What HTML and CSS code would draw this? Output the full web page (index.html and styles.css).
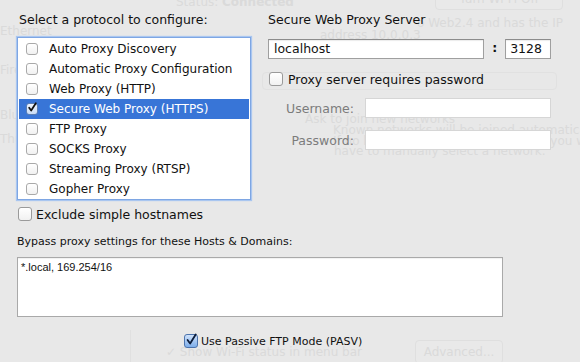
FILE: index.html
```html
<!DOCTYPE html>
<html>
<head>
<meta charset="utf-8">
<link rel="stylesheet" href="styles.css">
</head>
<body>
<div class="ghost" aria-hidden="true">
  <span class="g g-status">Status:</span>
  <span class="g g-conn">Connected</span>
  <span class="g-btn g-turn">Turn Wi-Fi Off</span>
  <span class="g g-ip">o Web2.4 and has the IP</span>
  <span class="g g-addr">address 10.0.0.3</span>
  <span class="g-pop"></span>
  <span class="g g-eth">Ethernet</span>
  <span class="g g-fw">FireWire</span>
  <span class="g g-bt">Bluetooth</span>
  <span class="g g-tb">Thunderbolt</span>
  <span class="g g-ask">Ask to join new networks</span>
  <span class="g g-known">Known networks will be joined automatically.</span>
  <span class="g g-ifno">If no known networks are available, you will</span>
  <span class="g g-have">have to manually select a network.</span>
  <span class="g g-show">✓ Show Wi-Fi status in menu bar</span>
  <span class="g-btn g-adv">Advanced...</span>
  <span class="g-line g-line1"></span>
</div>

<main class="sheet">
  <div class="top">
    <section class="left">
      <div class="title">Select a protocol to configure:</div>
      <div class="list">
        <div class="row"><span class="cb"></span><span>Auto Proxy Discovery</span></div>
        <div class="row"><span class="cb"></span><span>Automatic Proxy Configuration</span></div>
        <div class="row"><span class="cb"></span><span>Web Proxy (HTTP)</span></div>
        <div class="row sel"><span class="cb on"><svg viewBox="0 0 12 12" class="chk"><path d="M2.6 5.6 L5 9 L10.6 0.2"/></svg></span><span>Secure Web Proxy (HTTPS)</span></div>
        <div class="row"><span class="cb"></span><span>FTP Proxy</span></div>
        <div class="row"><span class="cb"></span><span>SOCKS Proxy</span></div>
        <div class="row"><span class="cb"></span><span>Streaming Proxy (RTSP)</span></div>
        <div class="row"><span class="cb"></span><span>Gopher Proxy</span></div>
      </div>
      <label class="opt exclude"><span class="cb big"></span><span>Exclude simple hostnames</span></label>
    </section>

    <section class="right">
      <div class="title">Secure Web Proxy Server</div>
      <div class="hostrow">
        <div class="field host">localhost</div>
        <div class="colon">:</div>
        <div class="field port">3128</div>
      </div>
      <label class="opt pw"><span class="cb big"></span><span>Proxy server requires password</span></label>
      <div class="cred">
        <div class="lab">Username:</div>
        <div class="field dis"></div>
      </div>
      <div class="cred">
        <div class="lab">Password:</div>
        <div class="field dis"></div>
      </div>
    </section>
  </div>

  <div class="bypass-label">Bypass proxy settings for these Hosts &amp; Domains:</div>
  <div class="bypass">*.local, 169.254/16</div>

  <label class="opt pasv"><span class="cb big blue"><svg viewBox="0 0 14 14" class="chk"><path d="M3 7 L6 11 L12.5 0.5"/></svg></span><span>Use Passive FTP Mode (PASV)</span></label>
</main>
</body>
</html>
```

FILE: styles.css
```css
* { box-sizing: border-box; }
html, body {
  margin: 0;
  padding: 0;
}
body {
  width: 580px;
  height: 362px;
  overflow: hidden;
  background: #e8e8e8;
  font-family: "DejaVu Sans", "Noto Sans", sans-serif;
  font-size: 12px;
  color: #111;
  position: relative;
}

/* background window seen through the sheet */
.ghost { position: absolute; inset: 0; z-index: 0; }
.g { position: absolute; color: #dadada; font-size: 12px; white-space: nowrap; }
.g-status { left: 176px; top: -5px; }
.g-conn { left: 222px; top: -5px; font-weight: bold; }
.g-ip { left: 417px; top: 16px; }
.g-addr { left: 320px; top: 28px; }
.g-eth { left: 0; top: 24px; }
.g-fw { left: 0; top: 63px; }
.g-bt { left: 0; top: 108px; }
.g-tb { left: 0; top: 132px; }
.g-ask { left: 305px; top: 112px; }
.g-known { left: 333px; top: 123px; }
.g-ifno { left: 333px; top: 134px; }
.g-have { left: 334px; top: 144px; }
.g-show { left: 166px; top: 345px; }
.g-btn { position: absolute; border: 1px solid #dfdfdf; border-radius: 4px; color: #dadada; font-size: 12px; text-align: center; background: #e9e9e9; }
.g-turn { left: 435px; top: -12px; width: 128px; height: 22px; line-height: 20px; }
.g-adv { left: 415px; top: 340px; width: 88px; height: 24px; line-height: 22px; }
.g-pop { position: absolute; left: 262px; top: 72px; width: 295px; height: 18px; border: 1px solid #e1e1e1; border-radius: 4px; }
.g-line { position: absolute; background: #e0e0e0; }
.g-line1 { left: 130px; top: 330px; width: 1px; height: 32px; }

.sheet {
  position: relative;
  z-index: 1;
  padding-top: 12px;
}
.top {
  display: flex;
  gap: 17px;
  padding-left: 17px;
}
.left { width: 234px; }
.right { width: 283px; }
.title {
  font-size: 12.5px;
  line-height: 16px;
  height: 16px;
  white-space: nowrap;
}
.left .title { padding-left: 2px; }

.list {
  margin-top: 9px;
  height: 163px;
  border: 1px solid #7ea6e3;
  box-shadow: 0 0 1px 1px #a9c6f0;
  background: #fff;
  padding: 1px 1px 0 1px;
}
.row {
  height: 20px;
  display: flex;
  align-items: center;
  padding-left: 7px;
  gap: 11px;
  white-space: nowrap;
}
.row.sel { background: #3875d7; color: #fff; }

.cb {
  flex: none;
  width: 12px;
  height: 12px;
  border: 1px solid #a9a9a9;
  border-radius: 3px;
  background: linear-gradient(#ffffff, #f1f1f1);
  position: relative;
}
.cb.big { width: 14px; height: 14px; border-color: #9a9a9a; border-radius: 3px; }
.cb.on { background: linear-gradient(#eef5ff, #c9dcf6); border-color: #5b7fb6; }
.cb.blue { background: linear-gradient(#cfe2fb, #7eaeea); border-color: #4d74ad; }
.chk {
  position: absolute;
  left: 0;
  top: -1px;
  width: 100%;
  height: 100%;
  overflow: visible;
}
.chk path {
  fill: none;
  stroke: #111;
  stroke-width: 2.1;
  stroke-linecap: round;
  stroke-linejoin: round;
}
.cb.blue .chk path { stroke: #0d1d3a; }

.opt {
  display: flex;
  align-items: center;
  white-space: nowrap;
  font-size: 12.5px;
}
.exclude { margin-top: 7px; height: 14px; padding-left: 1px; gap: 4px; }

.hostrow {
  display: flex;
  margin-top: 11px;
  height: 20px;
}
.field {
  height: 20px;
  background: #fff;
  border: 1px solid #9f9f9f;
  border-top-color: #8c8c8c;
  box-shadow: inset 0 1px 1px rgba(0,0,0,0.08);
  font-size: 12.5px;
  line-height: 18px;
  padding-left: 5px;
  white-space: nowrap;
}
.host { width: 217px; }
.colon { width: 21px; text-align: center; font-size: 12.5px; line-height: 18px; font-weight: bold; }
.port { width: 46px; padding-left: 4px; }

.pw { margin-top: 13px; height: 14px; padding-left: 1px; gap: 5px; }

.cred {
  display: flex;
  align-items: center;
  gap: 11px;
  margin-top: 12px;
}
.lab {
  width: 86px;
  text-align: right;
  color: #7c7c7c;
  font-size: 12.5px;
}
.field.dis {
  width: 186px;
  border-color: #d6d6d6;
  box-shadow: none;
}

.bypass-label {
  margin-top: 13px;
  padding-left: 17px;
  font-size: 11px;
  line-height: 16px;
  white-space: nowrap;
}
.bypass {
  margin: 7px 0 0 17px;
  width: 486px;
  height: 60px;
  background: #fff;
  border: 1px solid #a9a9a9;
  box-shadow: inset 0 1px 1px rgba(0,0,0,0.06);
  font-family: "Liberation Sans", Arial, sans-serif;
  font-size: 11px;
  line-height: 14px;
  padding: 2px 0 0 3px;
}
.pasv {
  margin-top: 17px;
  height: 14px;
  padding-left: 184px;
  gap: 3px;
  font-size: 11px;
}
```
